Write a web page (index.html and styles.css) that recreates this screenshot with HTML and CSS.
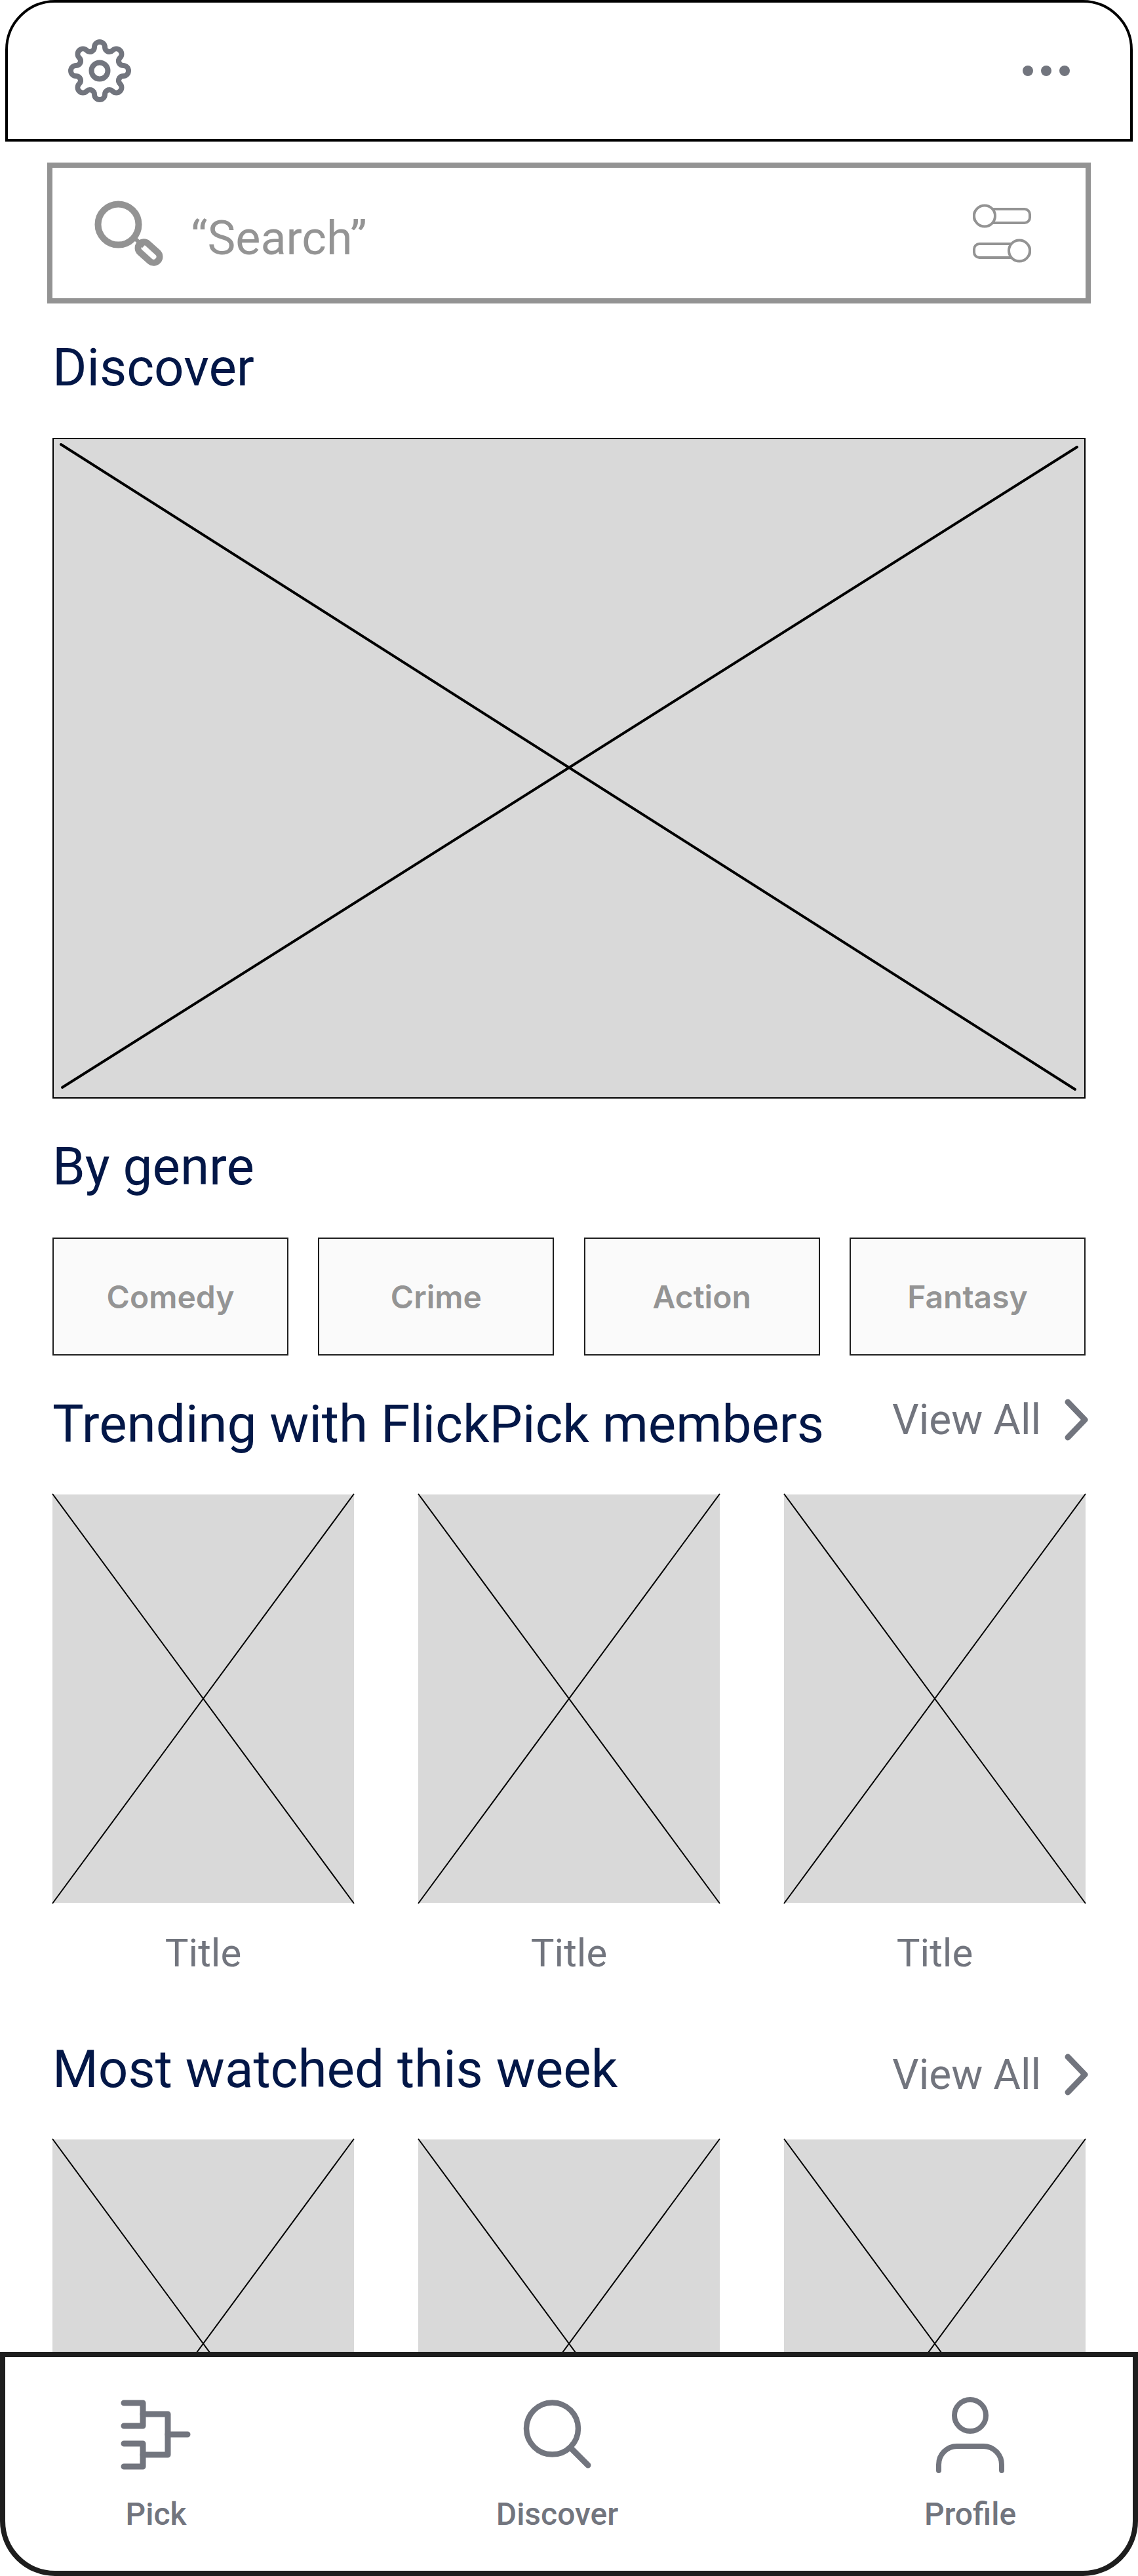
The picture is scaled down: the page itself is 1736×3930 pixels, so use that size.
FILE: index.html
```html
<!DOCTYPE html>
<html lang="en">
<head>
<meta charset="utf-8">
<title>FlickPick Discover</title>
<link rel="stylesheet" href="styles.css">
</head>
<body>
<svg class="defs" width="0" height="0" aria-hidden="true">
  <defs>
    <path id="lobe" d="M-12.2 -29.6C-9 -30.9 -8 -33 -8 -36A8 8 0 0 1 8 -36C8 -33 9 -30.9 12.2 -29.6"/>
  </defs>
</svg>
<div class="page">
  <header class="topbar">
    <svg class="gear" viewBox="-50 -50 100 100" width="100" height="100">
      <g class="gear-strokes">
        <use href="#lobe"/>
        <use href="#lobe" transform="rotate(45)"/>
        <use href="#lobe" transform="rotate(90)"/>
        <use href="#lobe" transform="rotate(135)"/>
        <use href="#lobe" transform="rotate(180)"/>
        <use href="#lobe" transform="rotate(225)"/>
        <use href="#lobe" transform="rotate(270)"/>
        <use href="#lobe" transform="rotate(315)"/>
        <circle r="12.5"/>
      </g>
    </svg>
    <div class="dots"><span class="dot"></span><span class="dot"></span><span class="dot"></span></div>
  </header>

  <div class="search">
    <svg class="search-icon" viewBox="0 0 115 110" width="115" height="110">
      <g class="search-strokes">
        <circle cx="41.500" cy="41.500" r="31"/>
        <path class="search-link" d="M66 62L80 75"/>
        <rect x="69" y="75" width="38" height="18" rx="9" transform="rotate(42 88 84)"/>
      </g>
    </svg>
    <span class="search-text">“Search”</span>
    <svg class="filter-icon" viewBox="0 0 89 90" width="89" height="90">
      <g class="filter-strokes">
        <rect x="2" y="8" width="85" height="21" rx="8"/>
        <circle cx="18" cy="18.500" r="16"/>
        <rect x="2" y="61" width="85" height="21" rx="8"/>
        <circle cx="71" cy="71.500" r="16"/>
      </g>
    </svg>
  </div>

  <h2 class="heading heading-discover">Discover</h2>
  <div class="hero">
    <svg class="cross" viewBox="0 0 1576 1008" preserveAspectRatio="none">
      <path d="M13 10L1560 994M1563 14L15 991"/>
    </svg>
  </div>

  <h2 class="heading heading-genre">By genre</h2>
  <div class="chips">
    <div class="chip">Comedy</div>
    <div class="chip">Crime</div>
    <div class="chip">Action</div>
    <div class="chip">Fantasy</div>
  </div>

  <section class="shelf shelf-trending">
    <div class="shelf-head">
      <h2 class="heading">Trending with FlickPick members</h2>
      <a class="view-all">View All
        <svg class="chev" viewBox="0 0 36 64" width="36" height="64"><path d="M5 5L31 32L5 59"/></svg>
      </a>
    </div>
    <div class="posters">
      <figure class="poster">
        <div class="poster-img"><svg class="cross-thin" viewBox="0 0 460 623" preserveAspectRatio="none"><path d="M0 -1L460 624M460 -1L0 624"/></svg></div>
        <figcaption class="poster-title">Title</figcaption>
      </figure>
      <figure class="poster">
        <div class="poster-img"><svg class="cross-thin" viewBox="0 0 460 623" preserveAspectRatio="none"><path d="M0 -1L460 624M460 -1L0 624"/></svg></div>
        <figcaption class="poster-title">Title</figcaption>
      </figure>
      <figure class="poster">
        <div class="poster-img"><svg class="cross-thin" viewBox="0 0 460 623" preserveAspectRatio="none"><path d="M0 -1L460 624M460 -1L0 624"/></svg></div>
        <figcaption class="poster-title">Title</figcaption>
      </figure>
    </div>
  </section>

  <section class="shelf shelf-watched">
    <div class="shelf-head">
      <h2 class="heading">Most watched this week</h2>
      <a class="view-all">View All
        <svg class="chev" viewBox="0 0 36 64" width="36" height="64"><path d="M5 5L31 32L5 59"/></svg>
      </a>
    </div>
    <div class="posters">
      <figure class="poster">
        <div class="poster-img"><svg class="cross-thin" viewBox="0 0 460 623" preserveAspectRatio="none"><path d="M0 -1L460 624M460 -1L0 624"/></svg></div>
      </figure>
      <figure class="poster">
        <div class="poster-img"><svg class="cross-thin" viewBox="0 0 460 623" preserveAspectRatio="none"><path d="M0 -1L460 624M460 -1L0 624"/></svg></div>
      </figure>
      <figure class="poster">
        <div class="poster-img"><svg class="cross-thin" viewBox="0 0 460 623" preserveAspectRatio="none"><path d="M0 -1L460 624M460 -1L0 624"/></svg></div>
      </figure>
    </div>
  </section>

  <nav class="tabbar">
    <a class="tab">
      <svg class="tab-icon" viewBox="0 0 120 130" width="120" height="130">
        <g class="tab-strokes tab-strokes-pick">
          <path d="M11 16H40V51H11"/>
          <path d="M40 33H78V95H40"/>
          <path d="M11 78H40V113H11"/>
          <path d="M78 64H108"/>
        </g>
      </svg>
      <span>Pick</span>
    </a>
    <a class="tab">
      <svg class="tab-icon" viewBox="0 0 120 130" width="120" height="130">
        <g class="tab-strokes tab-strokes-discover">
          <circle cx="52.500" cy="55" r="39.500"/>
          <path d="M81 85L107 111"/>
        </g>
      </svg>
      <span>Discover</span>
    </a>
    <a class="tab">
      <svg class="tab-icon" viewBox="0 0 120 130" width="120" height="130">
        <g class="tab-strokes tab-strokes-profile">
          <circle cx="60" cy="35" r="24"/>
          <path d="M12 119V110A28 28 0 0 1 40 82H80A28 28 0 0 1 108 110V119"/>
        </g>
      </svg>
      <span>Profile</span>
    </a>
  </nav>
</div>
</body>
</html>
```
FILE: styles.css
```css
* { box-sizing: border-box; }
html, body { margin: 0; padding: 0; background: #fff; }
body { font-family: Roboto, "Liberation Sans", sans-serif; }
.defs { position: absolute; }
.page { position: relative; height: 3930px; overflow: hidden; }

.topbar {
  height: 216px;
  margin: 0 8px;
  padding: 0 92px 0 90px;
  border: 4px solid #000;
  border-radius: 76px 76px 0 0;
  display: flex;
  align-items: center;
  justify-content: space-between;
}
.gear-strokes use, .gear-strokes circle {
  fill: none;
  stroke: #72757e;
  stroke-width: 8;
  stroke-linecap: round;
}
.dots { display: flex; gap: 12px; }
.dot { width: 16px; height: 16px; border-radius: 50%; background: #72757e; }

.search {
  height: 215px;
  margin: 32px 72px 0;
  padding: 0 83px 0 59px;
  border: 8px solid #939393;
  display: flex;
  align-items: center;
}
.search-strokes circle, .search-strokes path, .search-strokes rect {
  fill: none;
  stroke: #939393;
  stroke-width: 10;
}
.search-strokes .search-link { stroke-width: 6; }
.search-text {
  margin: 16px 0 0 37px;
  font-size: 72px;
  line-height: 84px;
  color: #949494;
  flex: 1;
}
.filter-strokes rect, .filter-strokes circle {
  fill: #fff;
  stroke: #939393;
  stroke-width: 4;
}

.heading {
  margin: 0;
  font-size: 80px;
  line-height: 94px;
  font-weight: 400;
  color: #031747;
}
.heading-discover { margin: 51px 0 60px 80px; }
.heading-genre { margin: 57px 0 61px 80px; }

.hero {
  height: 1008px;
  margin: 0 80px;
  background: #d9d9d9;
  border: 2px solid #000;
  position: relative;
}
.cross { position: absolute; inset: -2px; width: 1576px; height: 1008px; }
.cross path { fill: none; stroke: #000; stroke-width: 4; stroke-linecap: round; }

.chips {
  margin: 0 80px;
  display: grid;
  grid-template-columns: repeat(4, 360px);
  justify-content: space-between;
}
.chip {
  height: 180px;
  background: #fafafa;
  border: 2px solid #1e1e1e;
  display: flex;
  align-items: center;
  justify-content: center;
  font-family: Inter, "Liberation Sans", sans-serif;
  font-weight: 600;
  font-size: 48px;
  color: #949494;
}

.shelf { margin: 0 80px; }
.shelf-trending { margin-top: 58px; }
.shelf-watched { margin-top: 95px; }
.shelf-head {
  height: 94px;
  display: flex;
  justify-content: space-between;
  align-items: flex-start;
}
.view-all {
  display: flex;
  align-items: flex-start;
  font-size: 64px;
  line-height: 75px;
  color: #72757e;
  margin-right: -4px;
}
.shelf-trending .view-all { margin-top: 3px; }
.shelf-watched .view-all { margin-top: 18px; }
.chev { margin-left: 36px; margin-top: 5px; }
.chev path { fill: none; stroke: #72757e; stroke-width: 9; stroke-linecap: round; stroke-linejoin: round; }

.posters {
  margin-top: 60px;
  display: grid;
  grid-template-columns: repeat(3, 460px);
  justify-content: space-between;
}
.poster { margin: 0; }
.poster-img { height: 623px; background: #d9d9d9; }
.cross-thin { display: block; width: 460px; height: 623px; overflow: visible; }
.cross-thin path { fill: none; stroke: #000; stroke-width: 2; }
.poster-title {
  margin-top: 42px;
  text-align: center;
  font-size: 60px;
  line-height: 70px;
  color: #72757e;
}

.tabbar {
  position: absolute;
  left: 0;
  right: 0;
  bottom: 0;
  height: 342px;
  background: #fff;
  border: 8px solid #1e1e1e;
  border-radius: 0 0 84px 84px;
  display: grid;
  grid-template-columns: 460px 1fr 496px;
}
.tab {
  display: flex;
  flex-direction: column;
  align-items: center;
  padding-top: 54px;
  font-size: 48px;
  font-weight: 500;
  line-height: 56px;
  color: #72757e;
}
.tab span { margin-top: 28px; }
.tab-icon { display: block; }
.tab-strokes path, .tab-strokes circle {
  fill: none;
  stroke: #72757e;
  stroke-width: 9;
  stroke-linecap: round;
  stroke-linejoin: round;
}
.tab-strokes-discover circle { stroke-width: 8.500; }
.tab-strokes-profile path, .tab-strokes-profile circle { stroke-width: 8; }
```
